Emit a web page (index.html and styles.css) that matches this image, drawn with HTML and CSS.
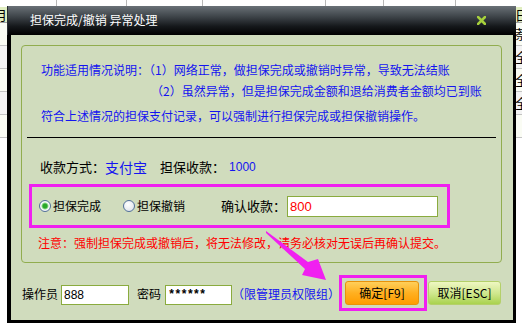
FILE: index.html
```html
<!DOCTYPE html>
<html lang="zh-CN">
<head>
    <meta charset="UTF-8">
    <title>担保完成/撤销 异常处理</title>
    <link rel="stylesheet" href="styles.css">
</head>
<body>
<div class="sheet">
    <div class="ruler"><span style="width:57px"></span><span style="width:70px"></span><span style="width:76px"></span><span style="width:123px"></span><span style="width:58px"></span><span style="width:72px"></span></div>
    <div class="sheet-row head"><span>月</span><span>日</span></div>
    <div class="sheet-row"><span></span><span>萘</span></div>
    <div class="sheet-row"><span></span><span>全</span></div>
    <div class="sheet-row"><span></span><span>全</span></div>
    <div class="sheet-row"><span></span><span>全</span></div>
    <div class="sheet-row"><span></span><span></span></div>
</div>

<div class="dialog">
    <div class="titlebar">
        <span class="title">担保完成/撤销 异常处理</span>
        <svg class="close" width="9" height="9" viewBox="0 0 9 9">
            <path d="M1 1 L8 8 M8 1 L1 8" stroke="#a6d03c" stroke-width="2.6" stroke-linecap="square"/>
        </svg>
    </div>
    <div class="dialog-body">
        <div class="group">
            <p class="note">功能适用情况说明：（1）网络正常，做担保完成或撤销时异常，导致无法结账</p>
            <p class="note second">（2）虽然异常，但是担保完成金额和退给消费者金额均已到账</p>
            <p class="note third">符合上述情况的担保支付记录，可以强制进行担保完成或担保撤销操作。</p>
            <div class="rule"></div>
            <div class="pay">
                <span>收款方式：</span><span class="pay-way">支付宝</span>
                <span class="pay-label">担保收款：</span><span class="amount">1000</span>
            </div>
            <div class="confirm hl">
                <label class="radio"><span class="dot checked"></span>担保完成</label>
                <label class="radio second-radio"><span class="dot"></span>担保撤销</label>
                <span class="confirm-label">确认收款：</span>
                <span class="field confirm-field">800</span>
            </div>
            <p class="warn">注意：强制担保完成或撤销后，将无法修改，请务必核对无误后再确认提交。</p>
        </div>
        <div class="footer">
            <span class="f-label">操作员</span>
            <span class="field op-field">888</span>
            <span class="f-label pw-label">密码</span>
            <span class="field pw-field">******</span>
            <span class="hint">（限管理员权限组）</span>
            <div class="ok-wrap hl">
                <button class="btn ok">确定[F9]</button>
            </div>
            <button class="btn cancel">取消[ESC]</button>
        </div>
    </div>
</div>

<svg class="arrow" width="522" height="330" viewBox="0 0 522 330">
    <polygon points="266,231 308,262 318,259 326,280 302,275 305,269 266,233" fill="#f020f0"/>
</svg>
</body>
</html>
```

FILE: styles.css
```css
body {
    margin: 0;
    width: 522px;
    height: 330px;
    overflow: hidden;
    position: relative;
    background: #fff;
    font-family: "Noto Sans CJK SC", sans-serif;
    font-size: 12px;
}
p {
    margin: 0;
}

/* sheet behind the dialog */
.sheet {
    color: #000;
}
.ruler {
    display: flex;
    height: 6px;
    margin-bottom: 1px;
}
.ruler span {
    box-sizing: border-box;
    border-right: 1px solid #b8b8b8;
    height: 6px;
}
.sheet-row {
    display: flex;
    justify-content: space-between;
    height: 22px;
    line-height: 22px;
    border-bottom: 1px solid #c4c4c4;
    margin: 0 -6px 0 -6px;
    font-size: 13px;
    background: #f4f4f4;
}
.sheet-row:nth-child(odd) {
    background: #fafcf4;
}
.sheet-row.head {
    height: 15px;
    line-height: 15px;
    background: #e0eec0;
    border-bottom-color: #a0a0a0;
}

/* dialog */
.dialog {
    position: absolute;
    left: 7px;
    top: 6px;
    width: 509px;
    background: #000;
    padding-bottom: 3px;
}
.titlebar {
    height: 29px;
    display: flex;
    align-items: center;
    justify-content: space-between;
    padding: 0 30px 0 22px;
    background: linear-gradient(#6a7177, #3a4045 40%, #15181b 70%, #000);
    border-left: 1px solid #2a2e31;
}
.title {
    color: #fff;
    font-size: 12px;
    line-height: 14px;
    margin-top: -1px;
}
.close {
    display: block;
    margin-top: -1px;
}
.dialog-body {
    margin: 0 3px 0 4px;
    height: 285px;
    background: #d0dcbd;
    overflow: hidden;
}
.group {
    box-sizing: border-box;
    height: 218px;
    margin: 10px 11px 0 10px;
    padding-top: 13px;
    border: 1px solid #91ad4f;
    border-radius: 4px;
}
.note {
    color: #1414f0;
    line-height: 21px;
    padding-left: 19px;
    white-space: nowrap;
}
.note.second {
    padding-left: 129px;
}
.note.third {
    margin-top: 4px;
}
.rule {
    height: 1px;
    background: #000;
    margin: 11px 5px 0 5px;
}
.pay {
    margin-top: 19px;
    padding-left: 18px;
    height: 20px;
    line-height: 20px;
    font-size: 13px;
    display: flex;
    align-items: center;
}
.pay-way {
    color: #1414f0;
    font-size: 14px;
}
.pay-label {
    margin-left: 13px;
}
.amount {
    color: #1414f0;
    font-family: "Liberation Sans", sans-serif;
    font-size: 12px;
    margin-left: 4px;
}

.hl {
    border: 3px solid #f020f0;
}
.confirm {
    box-sizing: border-box;
    width: 421px;
    height: 44px;
    margin: 7px 0 0 7px;
    padding-left: 7px;
    display: flex;
    align-items: center;
}
.radio {
    display: flex;
    align-items: center;
    gap: 2px;
    line-height: 16px;
}
.second-radio {
    margin-left: 22px;
}
.dot {
    box-sizing: border-box;
    width: 12px;
    height: 12px;
    border-radius: 50%;
    border: 1px solid #52709a;
    background: radial-gradient(circle at 40% 35%, #fff, #e4e8ee 70%, #c8d0dc);
}
.dot.checked {
    background: radial-gradient(circle, #2aa82a 0, #2aa82a 2px, #8cd88c 3px, #fff 4px, #e4e8ee 80%);
}
.confirm-label {
    margin-left: 36px;
    font-size: 13px;
    line-height: 16px;
}
.field {
    box-sizing: border-box;
    display: inline-block;
    background: #fff;
    border: 1px solid #8aab3e;
    font-family: "Liberation Sans", sans-serif;
    font-size: 12px;
    padding-left: 2px;
}
.confirm-field {
    width: 151px;
    height: 21px;
    line-height: 19px;
    margin-left: 1px;
    color: #f00;
    font-size: 13px;
}
.warn {
    color: #f00;
    margin-top: 5px;
    padding-left: 16px;
    line-height: 20px;
    white-space: nowrap;
}

/* footer */
.footer {
    display: flex;
    align-items: center;
    margin: 12px 0 0 11px;
    white-space: nowrap;
}
.f-label {
    line-height: 16px;
    margin-top: 2px;
}
.op-field, .pw-field {
    height: 20px;
    line-height: 18px;
    margin-top: 3px;
}
.op-field {
    width: 68px;
    margin-left: 3px;
}
.pw-label {
    margin-left: 8px;
}
.pw-field {
    width: 67px;
    margin-left: 4px;
    font-family: "Liberation Mono", monospace;
    font-weight: bold;
    letter-spacing: -1px;
}
.hint {
    color: #1414f0;
    width: 107px;
    line-height: 16px;
    margin-top: 2px;
}
.ok-wrap {
    box-sizing: border-box;
    width: 88px;
    height: 36px;
    padding: 3px 5px 3px 3px;
}
.btn {
    box-sizing: border-box;
    height: 24px;
    border-radius: 3px;
    font-family: "Noto Sans CJK SC", sans-serif;
    font-size: 12px;
    color: #000;
    padding: 0;
    line-height: 22px;
}
.ok {
    width: 74px;
    background: linear-gradient(#ffcf5a, #ffb020 50%, #ff9c00);
    border: 1px solid #e8920a;
}
.cancel {
    width: 73px;
    margin-left: 1px;
    background: linear-gradient(#eef7c2, #cde68a 55%, #a9d24e);
    border: 1px solid #b4d06a;
}

.arrow {
    position: absolute;
    left: 0;
    top: 0;
    pointer-events: none;
}
```
